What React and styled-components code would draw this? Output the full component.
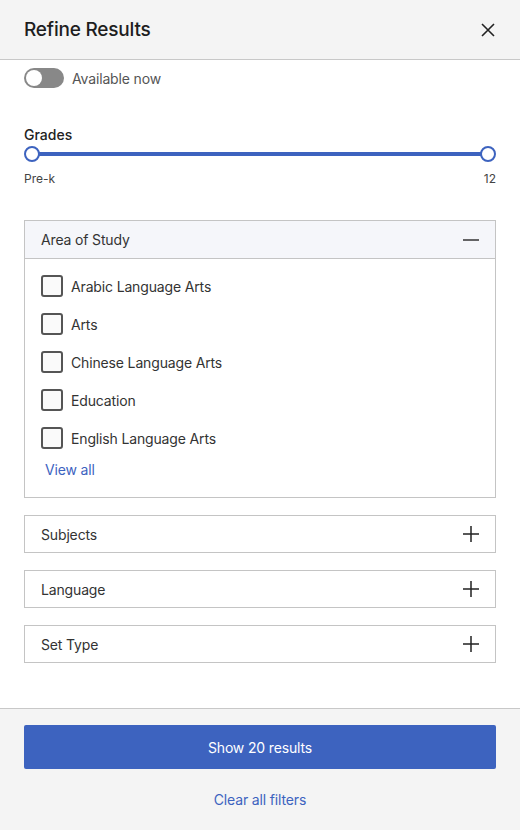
import React from "react";
import styled, { createGlobalStyle } from "styled-components";

const GlobalStyle = createGlobalStyle`
    html, body {
        margin: 0;
        padding: 0;
        background: #ffffff;
    }
    body {
        font-family: Inter, "Noto Sans", "Liberation Sans", sans-serif;
        color: #222;
    }
`;

const Panel = styled.div`
    display: flex;
    flex-direction: column;
    width: 520px;
    height: 830px;
    background: #ffffff;
`;

const Header = styled.div`
    display: flex;
    justify-content: space-between;
    align-items: center;
    height: 60px;
    padding: 0 20px 0 24px;
    background: #f4f4f4;
    border-bottom: 1px solid #c8c8c8;
    box-sizing: border-box;
`;

const Title = styled.h1`
    margin: 0;
    font-size: 19px;
    font-weight: 500;
    color: #1e1e1e;
    letter-spacing: -0.2px;
`;

const CloseButton = styled.button`
    display: flex;
    align-items: center;
    justify-content: center;
    width: 24px;
    height: 24px;
    padding: 0;
    border: none;
    background: transparent;
    cursor: pointer;
`;

const Body = styled.div`
    flex: 1;
    display: flex;
    flex-direction: column;
    padding: 7px 24px 0;
`;

const ToggleRow = styled.label`
    display: flex;
    align-items: center;
    gap: 8px;
    height: 22px;
    font-size: 14px;
    letter-spacing: -0.15px;
    color: #555;
`;

const Track = styled.span`
    position: relative;
    width: 40px;
    height: 20px;
    border-radius: 10px;
    background: ${(p) => (p.$on ? "#3d63bf" : "#888888")};
`;

const Knob = styled.span`
    position: absolute;
    top: 2px;
    left: ${(p) => (p.$on ? "22px" : "2px")};
    width: 16px;
    height: 16px;
    border-radius: 50%;
    background: #ffffff;
`;

const GradesBlock = styled.div`
    display: flex;
    flex-direction: column;
    margin-top: 37px;
`;

const Label = styled.div`
    font-size: 14px;
    font-weight: 500;
    color: #222;
    line-height: 18px;
`;

const Slider = styled.div`
    position: relative;
    height: 18px;
    margin-top: 1px;
`;

const SliderTrack = styled.div`
    position: absolute;
    left: 8px;
    right: 8px;
    top: 7px;
    height: 4px;
    background: #3d63bf;
`;

const Thumb = styled.span`
    position: absolute;
    top: 1px;
    ${(p) => (p.$end ? "right: 0;" : "left: 0;")}
    width: 16px;
    height: 16px;
    border-radius: 50%;
    border: 2px solid #3d63bf;
    background: #ffffff;
    box-sizing: border-box;
`;

const SliderLabels = styled.div`
    display: flex;
    justify-content: space-between;
    margin-top: 8px;
    font-size: 12px;
    color: #444;
`;

const Accordions = styled.div`
    display: flex;
    flex-direction: column;
    gap: 17px;
    margin-top: 34px;
`;

const Section = styled.div`
    border: 1px solid #c4c4c4;
`;

const SectionHead = styled.div`
    display: flex;
    justify-content: space-between;
    align-items: center;
    height: ${(p) => (p.$open ? "37px" : "36px")};
    padding: 0 16px;
    background: ${(p) => (p.$open ? "#f5f6fa" : "#ffffff")};
    border-bottom: ${(p) => (p.$open ? "1px solid #c4c4c4" : "none")};
    font-size: 14px;
    letter-spacing: -0.15px;
    color: #333;
`;

const SectionBody = styled.div`
    display: flex;
    flex-direction: column;
    padding: 8px 16px 19px;
`;

const CheckRow = styled.label`
    display: flex;
    align-items: center;
    gap: 8px;
    height: 38px;
    font-size: 14px;
    letter-spacing: -0.15px;
    color: #333;
`;

const Box = styled.span`
    width: 22px;
    height: 22px;
    border: 2px solid #555;
    border-radius: 3px;
    background: #fafafa;
    box-sizing: border-box;
`;

const ViewAll = styled.a`
    margin-top: 4px;
    padding-left: 4px;
    font-size: 14px;
    letter-spacing: -0.15px;
    color: #3d63bf;
    cursor: pointer;
`;

const Footer = styled.div`
    display: flex;
    flex-direction: column;
    align-items: center;
    height: 122px;
    padding: 16px 24px 0;
    background: #f4f4f4;
    border-top: 1px solid #c8c8c8;
    box-sizing: border-box;
`;

const PrimaryButton = styled.button`
    width: 100%;
    height: 44px;
    border: none;
    border-radius: 2px;
    background: #3d63bf;
    color: #ffffff;
    font-family: inherit;
    font-size: 14px;
    letter-spacing: -0.15px;
    cursor: pointer;
`;

const ClearLink = styled.a`
    margin-top: 22px;
    font-size: 14px;
    letter-spacing: -0.15px;
    color: #3d63bf;
    cursor: pointer;
`;

const Icon = ({ kind }) => {
    if (kind === "minus") {
        return (
            <svg width="16" height="16" viewBox="0 0 16 16">
                <path d="M0 8h16" stroke="#333" strokeWidth="1.5" />
            </svg>
        );
    }
    return (
        <svg width="16" height="16" viewBox="0 0 16 16">
            <path d="M0 8h16M8 0v16" stroke="#222" strokeWidth="1.5" />
        </svg>
    );
};

const areas = [
    "Arabic Language Arts",
    "Arts",
    "Chinese Language Arts",
    "Education",
    "English Language Arts",
];

const App = () => {
    return (
        <Panel>
            <GlobalStyle />
            <Header>
                <Title>Refine Results</Title>
                <CloseButton aria-label="Close">
                    <svg width="16" height="16" viewBox="0 0 16 16">
                        <path d="M2 2l12 12M14 2L2 14" stroke="#222" strokeWidth="1.6" />
                    </svg>
                </CloseButton>
            </Header>
            <Body>
                <ToggleRow>
                    <Track>
                        <Knob />
                    </Track>
                    Available now
                </ToggleRow>
                <GradesBlock>
                    <Label>Grades</Label>
                    <Slider>
                        <SliderTrack />
                        <Thumb />
                        <Thumb $end />
                    </Slider>
                    <SliderLabels>
                        <span>Pre-k</span>
                        <span>12</span>
                    </SliderLabels>
                </GradesBlock>
                <Accordions>
                    <Section>
                        <SectionHead $open>
                            Area of Study
                            <Icon kind="minus" />
                        </SectionHead>
                        <SectionBody>
                            {areas.map((a) => (
                                <CheckRow key={a}>
                                    <Box />
                                    {a}
                                </CheckRow>
                            ))}
                            <ViewAll>View all</ViewAll>
                        </SectionBody>
                    </Section>
                    {["Subjects", "Language", "Set Type"].map((s) => (
                        <Section key={s}>
                            <SectionHead>
                                {s}
                                <Icon kind="plus" />
                            </SectionHead>
                        </Section>
                    ))}
                </Accordions>
            </Body>
            <Footer>
                <PrimaryButton>Show 20 results</PrimaryButton>
                <ClearLink>Clear all filters</ClearLink>
            </Footer>
        </Panel>
    );
};

export default App;
